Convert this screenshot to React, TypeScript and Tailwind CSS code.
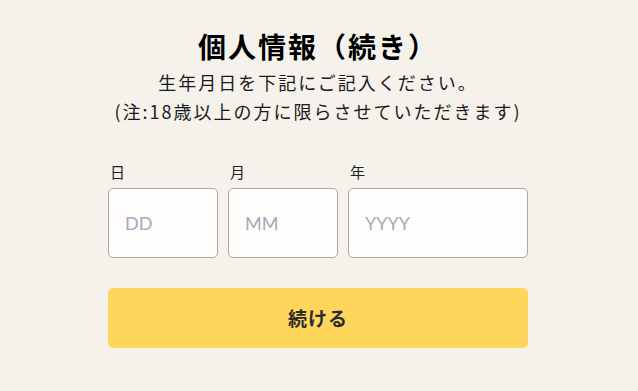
import React from 'react';

const jp = { fontFamily: '"Noto Sans CJK JP", "Noto Sans", sans-serif' };

const fields = [
  { label: '日', placeholder: 'DD', width: 'w-[110px]' },
  { label: '月', placeholder: 'MM', width: 'w-[110px]' },
  { label: '年', placeholder: 'YYYY', width: 'w-[180px]' },
];

export default function App() {
  return (
    <div className="min-h-screen w-full bg-[#f5f2ec] text-[#1a1a1a]" style={jp}>
      <div className="ml-[108px] flex w-[420px] flex-col items-center pt-[28px]">
        <h1 className="text-[28px] font-bold leading-[36px] tracking-[2px] text-black">個人情報（続き）</h1>
        <p className="mt-[4px] text-[18px] leading-[29px] tracking-[2px]">生年月日を下記にご記入ください。</p>
        <p className="text-[18px] leading-[29px] tracking-[2px]">(注:18歳以上の方に限らさせていただきます)</p>

        <div className="mt-[36px] flex w-full gap-[10px]">
          {fields.map((f) => (
            <label key={f.label} className={`flex flex-col ${f.width}`}>
              <span className="pl-[2px] text-[15px] leading-[20px] text-[#222]">{f.label}</span>
              <input
                placeholder={f.placeholder}
                className="mt-[6px] h-[70px] w-full rounded-[5px] border border-[#aca7a2] bg-[#fefdfb] px-[16px] text-[18px] text-[#333] outline-none placeholder:text-[#a6a9b6]"
                style={{ fontFamily: 'Lato, "Noto Sans", sans-serif' }}
              />
            </label>
          ))}
        </div>

        <button className="mt-[30px] h-[60px] w-full rounded-[5px] bg-[#fdd65b] text-[19px] font-bold tracking-[1px] text-[#2b2b2b]">
          続ける
        </button>
      </div>
    </div>
  );
}
